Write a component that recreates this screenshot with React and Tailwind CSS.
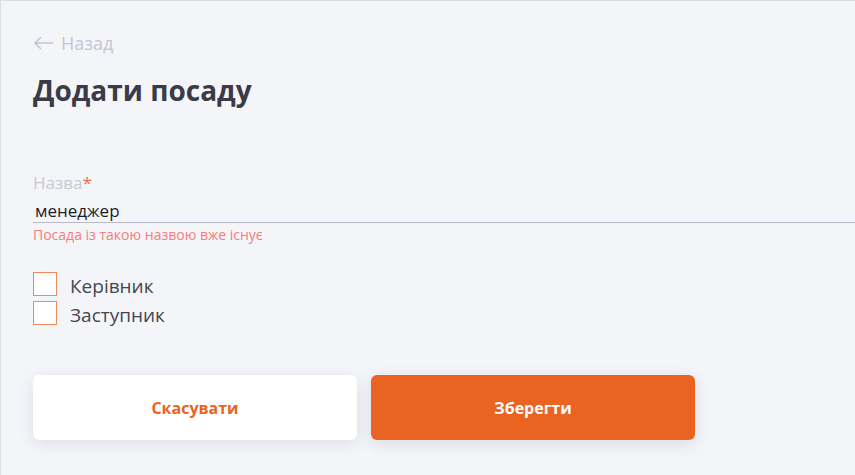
import { useState } from 'react';

const font = { fontFamily: '"Open Sans", "Noto Sans", sans-serif' };

function Checkbox({ label }) {
  const [checked, setChecked] = useState(false);
  return (
    <label className="flex items-center h-[29px] cursor-pointer">
      <span
        onClick={() => setChecked(!checked)}
        className="w-6 h-6 border border-[#ee8a5c] bg-white flex items-center justify-center"
      >
        {checked && <span className="w-3 h-3 bg-[#ea6421]" />}
      </span>
      <span className="ml-[13px] pt-[6px] text-[19px] text-[#45454f]">{label}</span>
    </label>
  );
}

export default function App() {
  const [name, setName] = useState('менеджер');

  return (
    <div
      className="w-[855px] h-[475px] bg-[#f4f5f9] border-t border-l border-[#dcdde3] overflow-hidden"
      style={font}
    >
      <div className="pl-[32px] pt-[30px]">
        <button className="flex items-center gap-[7px] text-[18px] text-[#c4c5d4] leading-6 h-6">
          <svg width="21" height="14" viewBox="0 0 21 14" fill="none" stroke="#c4c5d4" strokeWidth="1.6">
            <path d="M20 7H2M8 1L2 7l6 6" />
          </svg>
          <span>Назад</span>
        </button>

        <h1 className="mt-[17px] text-[28px] font-bold text-[#3b3b47] leading-9">Додати посаду</h1>

        <div className="mt-[63px]">
          <div className="text-[17px] leading-6 text-[#c8c9d7]">
            Назва<span className="text-[#ef6a4a]">*</span>
          </div>
          <input
            value={name}
            onChange={(e) => setName(e.target.value)}
            className="block w-full h-[28px] pt-1 px-[2px] text-[17px] text-[#1d1d24] bg-transparent border-b border-[#b9b9c9] outline-none"
          />
          <div className="mt-[2px] text-[14px] leading-5 text-[#f77b7b]">Посада із такою назвою вже існує</div>
        </div>

        <div className="mt-[24px] flex flex-col">
          <Checkbox label="Керівник" />
          <Checkbox label="Заступник" />
        </div>

        <div className="mt-[48px] flex gap-[14px]">
          <button className="w-[324px] h-[65px] rounded-md bg-white shadow-[0_4px_16px_rgba(40,40,80,0.10)] text-[16px] font-bold text-[#ea6421]">
            Скасувати
          </button>
          <button className="w-[324px] h-[65px] rounded-md bg-[#ea6421] shadow-[0_4px_16px_rgba(40,40,80,0.12)] text-[16px] font-bold text-white">
            Зберегти
          </button>
        </div>
      </div>
    </div>
  );
}
